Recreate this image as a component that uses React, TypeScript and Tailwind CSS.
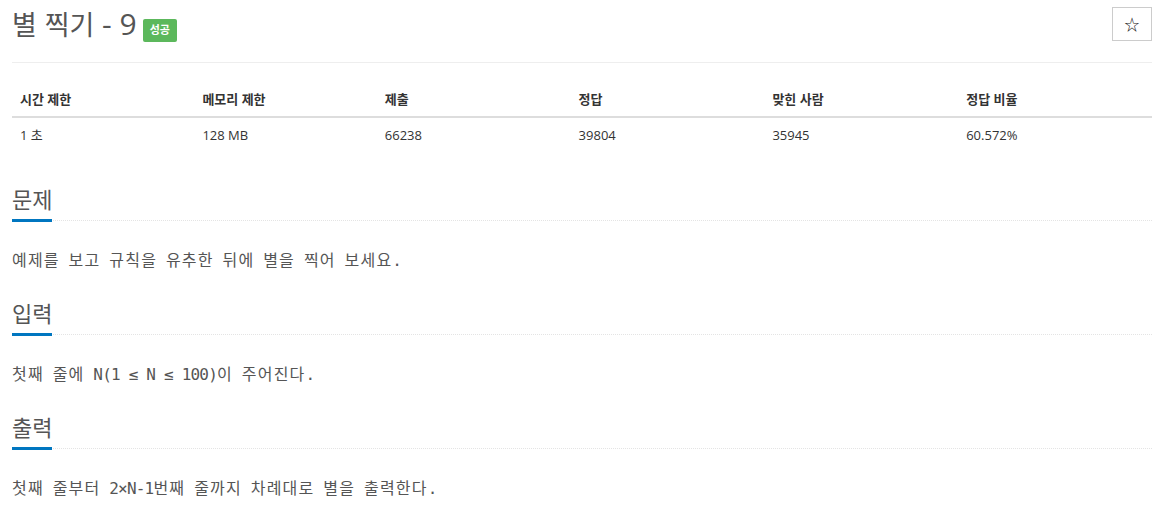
import React from "react";

const sans = { fontFamily: '"Open Sans", "Noto Sans CJK KR", sans-serif' };

function Mono({ text }: { text: string }) {
  const parts = text.split(/([\uAC00-\uD7A3]+)/).filter((p) => p.length > 0);
  return (
    <>
      {parts.map((p, i) =>
        /[\uAC00-\uD7A3]/.test(p) ? (
          <span key={i} className="tracking-[1.2px]">
            {p}
          </span>
        ) : (
          <span key={i} className="tracking-[-0.8px]">
            {p}
          </span>
        )
      )}
    </>
  );
}

function Section({ title, text }: { title: string; text: string }) {
  return (
    <section>
      <div className="border-b border-dotted border-[#e4e4e4]">
        <h2
          className="inline-block text-[22px] leading-[30px] pb-[5px] mb-[-2px] border-b-[3px] border-[#0076c0] text-[#555]"
          style={sans}
        >
          {title}
        </h2>
      </div>
      <p
        className="mt-[29px] mb-[26px] text-[16px] leading-[22px] text-[#555]"
        style={{ fontFamily: '"DejaVu Sans Mono", "Noto Sans CJK KR", monospace' }}
      >
        <Mono text={text} />
      </p>
    </section>
  );
}

export default function App() {
  const heads = ["시간 제한", "메모리 제한", "제출", "정답", "맞힌 사람", "정답 비율"];
  const vals = ["1 초", "128 MB", "66238", "39804", "35945", "60.572%"];
  const widths = ["w-[16%]", "w-[16%]", "w-[17%]", "w-[17%]", "w-[17%]", "w-[17%]"];
  return (
    <div className="bg-white pl-[12px] pr-[4px] min-h-[509px]" style={sans}>
      <div className="pt-[7px] flex justify-between items-start">
        <div className="flex items-start">
          <h1 className="text-[30px] leading-[34px] text-[#555] font-normal" style={sans}>
            <span className="text-[27px]">별</span> <span className="text-[27px]">찍기</span> - 9
          </h1>
          <span className="ml-[6px] mt-[12px] h-[23px] px-[7px] flex items-center bg-[#5cb85c] text-white text-[11px] font-bold rounded-[2px]">
            성공
          </span>
        </div>
        <button className="w-[40px] h-[34px] border border-[#ccc] bg-white flex items-center justify-center text-[15px] text-[#222]">
          ☆
        </button>
      </div>
      <div className="mt-[20px] border-t border-[#eee]" />
      <table className="w-full mt-[19px] mb-[32px] text-[13px] text-[#333] border-collapse table-fixed">
        <thead>
          <tr>
            {heads.map((h, i) => (
              <th
                key={h}
                className={`${widths[i]} text-left font-bold px-[8px] pt-[8px] pb-[7px] leading-[18.5px] border-b-2 border-[#ddd]`}
              >
                {h}
              </th>
            ))}
          </tr>
        </thead>
        <tbody>
          <tr>
            {vals.map((v) => (
              <td key={v} className="px-[8px] py-[8px] leading-[18.5px]">
                {v}
              </td>
            ))}
          </tr>
        </tbody>
      </table>
      <Section title="문제" text="예제를 보고 규칙을 유추한 뒤에 별을 찍어 보세요." />
      <Section title="입력" text="첫째 줄에 N(1 ≤ N ≤ 100)이 주어진다." />
      <Section title="출력" text="첫째 줄부터 2×N-1번째 줄까지 차례대로 별을 출력한다." />
    </div>
  );
}
